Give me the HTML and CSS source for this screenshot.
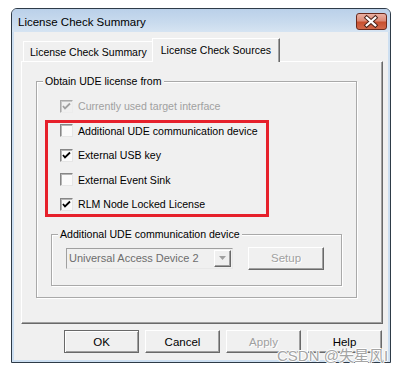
FILE: index.html
```html
<!DOCTYPE html>
<html lang="en">
<head>
<title>License Check Summary</title>
<meta charset="utf-8">
<link rel="stylesheet" href="styles.css">
</head>
    <body>
        <div class="window">
            <div class="titlebar">
                <span class="title">License Check Summary</span>
                <span class="close">
                    <svg width="31" height="17" viewBox="0 0 31 17">
                        <path d="M11 4.5L20 12.5M20 4.5L11 12.5" stroke="#4a2219" stroke-width="4.2" stroke-linecap="square"/>
                        <path d="M11 4.5L20 12.5M20 4.5L11 12.5" stroke="#ffffff" stroke-width="2.2" stroke-linecap="square"/>
                    </svg>
                </span>
            </div>
            <div class="client">
                <div class="tabs">
                    <div class="tab">License Check Summary</div>
                    <div class="tab active">License Check Sources</div>
                </div>
                <div class="page">
                    <fieldset class="group">
                        <legend>Obtain UDE license from</legend>
                        <div class="check disabled">
                            <span class="box"><svg width="11" height="11" viewBox="0 0 11 11"><polyline points="2,5 4,7.5 9,2.5" fill="none" stroke="#a0a0a0" stroke-width="1.8"/></svg></span>
                            Currently used target interface
                        </div>
                        <div class="marked">
                            <div class="check">
                                <span class="box"></span>
                                Additional UDE communication device
                            </div>
                            <div class="check">
                                <span class="box"><svg width="11" height="11" viewBox="0 0 11 11"><polyline points="2,5 4,7.5 9,2.5" fill="none" stroke="#000000" stroke-width="1.8"/></svg></span>
                                External USB key
                            </div>
                            <div class="check">
                                <span class="box"></span>
                                External Event Sink
                            </div>
                            <div class="check">
                                <span class="box"><svg width="11" height="11" viewBox="0 0 11 11"><polyline points="2,5 4,7.5 9,2.5" fill="none" stroke="#000000" stroke-width="1.8"/></svg></span>
                                RLM Node Locked License
                            </div>
                        </div>
                        <fieldset class="group sub">
                            <legend>Additional UDE communication device</legend>
                            <div class="device">
                                <div class="combo">
                                    <span class="combo_text">Universal Access Device 2</span>
                                    <span class="drop"><svg width="7" height="4" viewBox="0 0 7 4"><path d="M0 0H7L3.5 4Z" fill="#a0a0a0"/></svg></span>
                                </div>
                                <div class="button setup disabled">Setup</div>
                            </div>
                        </fieldset>
                    </fieldset>
                </div>
                <div class="buttons">
                    <div class="button default">OK</div>
                    <div class="button">Cancel</div>
                    <div class="button disabled">Apply</div>
                    <div class="button">Help</div>
                </div>
            </div>
        </div>
        <div class="watermark">CSDN @失星风I</div>
    </body>
</html>
```

FILE: styles.css
```css
@charset "utf-8";

*, *:before, *:after {
    box-sizing: border-box;
}

body{
    margin: 0;
    padding: 8px 0 0 11px;
    background: #ffffff;
    color: #000000;
    font-family: "Liberation Sans", Arial, sans-serif;
    font-size: 10.6px;
    position: relative;
    height: 373px;
    overflow: hidden;
}

.window{
    width: 380px;
    height: 355px;
    border: 1px solid #2e3b48;
    border-radius: 6px 6px 0 0;
    background: #cddff1;
    display: flex;
    flex-direction: column;
}

.titlebar{
    height: 23px;
    display: flex;
    align-items: flex-start;
    justify-content: space-between;
    padding-left: 6px;
    border-radius: 5px 5px 0 0;
    background: linear-gradient(#bad0e9, #c9dbee 60%, #d6e4f2);
}

.title{
    font-size: 11.5px;
    line-height: 14px;
    padding-top: 6px;
}

.close{
    width: 31px;
    height: 17px;
    margin: 4px 3px 0 0;
    border: 1px solid #6b2a1d;
    border-radius: 3px;
    background: linear-gradient(#eab0a3, #dc8a76 45%, #c8502f 55%, #d2694b);
    display: flex;
}

.close svg{
    margin: -1px 0 0 -1px;
}

.client{
    flex: 1;
    margin: 0 2px 2px;
    background: #f0f0f0;
    padding: 6px 5px 0 7px;
}

.tabs{
    height: 23px;
    display: flex;
    align-items: flex-end;
    padding-left: 2px;
}

.tab{
    height: 20px;
    padding: 2px 6px 0;
    line-height: 16px;
    border: 1px solid #ffffff;
    border-right-color: #696969;
    border-bottom: none;
    box-shadow: inset -1px 0 #a0a0a0;
    background: #f0f0f0;
    font-size: 10.5px;
}

.tab.active{
    height: 24px;
    padding: 3px 8px 0;
    margin: 0 -2px -1px -2px;
    position: relative;
    z-index: 1;
}

.page{
    height: 263px;
    border: 1px solid #ffffff;
    border-right-color: #696969;
    border-bottom-color: #696969;
    box-shadow: inset -1px -1px #a0a0a0;
    padding-top: 13px;
}

.group{
    margin: 0 25px 0 14px;
    padding: 6px 6px 11px 6px;
    border: 1px solid #a9a9a9;
    box-shadow: inset 1px 1px #ffffff, 1px 1px #ffffff;
    min-width: 0;
}

.group legend{
    padding: 0 2px;
    line-height: 13px;
    background: #f0f0f0;
}

.check{
    height: 24.5px;
    display: flex;
    align-items: center;
    padding-left: 17px;
}

.check.disabled{
    color: #a0a0a0;
}

.box{
    width: 13px;
    height: 13px;
    margin-right: 5px;
    border: 1px solid;
    border-color: #868686 #e6e6e6 #e6e6e6 #868686;
    box-shadow: inset 1px 1px #b5b5b5;
    background: #fafafa;
    display: flex;
    align-items: center;
    justify-content: center;
}

.check.disabled .box{
    background: #f0f0f0;
    border-color: #a8a8a8 #ececec #ececec #a8a8a8;
    box-shadow: inset 1px 1px #c8c8c8;
}

.marked{
    position: relative;
}

.marked:after{
    content: "";
    position: absolute;
    left: 2px;
    top: 1.5px;
    width: 224px;
    height: 97px;
    border: 3px solid #e6202b;
    pointer-events: none;
}

.group.sub{
    width: 291px;
    margin: 11px 0 0 8px;
    padding: 6px 6px 15px 6px;
}

.device{
    display: flex;
    align-items: center;
}

.combo{
    width: 167px;
    height: 21px;
    margin-left: 8px;
    border: 1px solid;
    border-color: #a0a0a0 #e8e8e8 #e8e8e8 #a0a0a0;
    background: #f0f0f0;
    display: flex;
    align-items: center;
    justify-content: space-between;
    padding: 0 0 0 2px;
    color: #6d6d6d;
    font-size: 11px;
}

.drop{
    width: 17px;
    height: 17px;
    margin-right: 1px;
    border: 1px solid;
    border-color: #ffffff #696969 #696969 #ffffff;
    box-shadow: inset -1px -1px #a0a0a0;
    display: flex;
    align-items: center;
    justify-content: center;
}

.button{
    width: 75px;
    height: 23px;
    border: 1px solid;
    border-color: #ffffff #696969 #696969 #ffffff;
    box-shadow: inset -1px -1px #a0a0a0;
    background: #f0f0f0;
    display: flex;
    align-items: center;
    justify-content: center;
    font-size: 11.5px;
}

.button.default{
    border-color: #696969;
    box-shadow: inset 1px 1px #ffffff, inset -1px -1px #a0a0a0;
}

.button.disabled{
    color: #a0a0a0;
    text-shadow: 1px 1px #ffffff;
}

.setup{
    width: 76px;
    margin-left: 15px;
}

.buttons{
    display: flex;
    justify-content: flex-end;
    gap: 6px;
    margin-top: 6px;
    padding-right: 1px;
}

.watermark{
    position: absolute;
    left: 277px;
    top: 344px;
    font-family: "Liberation Sans", "Noto Sans CJK SC", sans-serif;
    font-size: 15px;
    color: #a5a5a5;
    text-shadow: 1px 0 #ffffff, -1px 0 #ffffff, 0 1px #ffffff, 0 -1px #ffffff;
    white-space: nowrap;
}
```
